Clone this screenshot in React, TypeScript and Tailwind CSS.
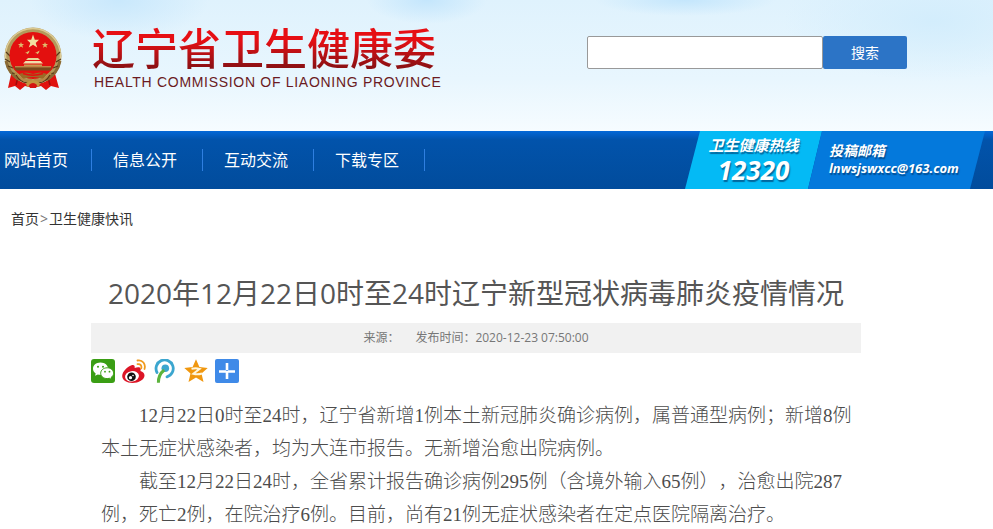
import type { ReactNode } from 'react';
import { useState } from 'react';

const NAV_ITEMS = ['网站首页', '信息公开', '互动交流', '下载专区'];

const PARAGRAPHS = [
  '12月22日0时至24时，辽宁省新增1例本土新冠肺炎确诊病例，属普通型病例；新增8例本土无症状感染者，均为大连市报告。无新增治愈出院病例。',
  '截至12月22日24时，全省累计报告确诊病例295例（含境外输入65例），治愈出院287例，死亡2例，在院治疗6例。目前，尚有21例无症状感染者在定点医院隔离治疗。',
];

function Emblem() {
  return (
    <svg viewBox="0 0 60 66" className="h-[66px] w-[60px] shrink-0" aria-hidden="true">
      {/* 绶带 */}
      <path d="M9 44 L5 62 L12 60 L17 64 L22 60 L30 62 L38 60 L43 64 L48 60 L56 62 L51 44 Z" fill="#e0120f" />
      <path d="M13 59 L15 51 M47 59 L45 51" stroke="#9c0d0b" strokeWidth="1.5" />
      {/* 麦穗 */}
      <circle cx="30" cy="30" r="28.500" fill="#b39a5c" />
      <circle cx="30" cy="30" r="27.500" fill="none" stroke="#dccb94" strokeWidth="1.500" />
      <path d="M3 35 A28 28 0 0 0 17 54 M57 35 A28 28 0 0 1 43 54" fill="none" stroke="#8a6a35" strokeWidth="3" />
      <path d="M3 26 l4 4 M2 33 l5 3 M5 40 l5 2 M9 47 l5 1 M57 26 l-4 4 M58 33 l-5 3 M55 40 l-5 2 M51 47 l-5 1" stroke="#54391a" strokeWidth="1.200" />
      <circle cx="30" cy="29.500" r="23.500" fill="#e3100f" />
      {/* 五星 */}
      <path d="M30 8.500 L31.800 13.800 L36 13.800 L32.700 17 L34.200 21.500 L30 18.800 L25.800 21.500 L27.300 17 L24 13.800 L28.200 13.800 Z" fill="#f1e0a0" />
      <g fill="#dfba6c">
        <path d="M18 16 l.8 2 h2.200 l-1.700 1.500 .8 2.300 -2.100 -1.300 -2 1.300 .7 -2.300 -1.700 -1.500 h2.200 z" />
        <path d="M42 16 l.8 2 h2.200 l-1.700 1.500 .8 2.300 -2.100 -1.300 -2 1.300 .7 -2.300 -1.700 -1.500 h2.200 z" />
        <path d="M22 27 l2 -1 2.500 -1.500 -.5 2 -1.500 1.800 -.7 -1 z" />
        <path d="M32 27 l2 -1 2.500 -1.500 -.5 2 -1.500 1.800 -.7 -1 z" />
      </g>
      {/* 天安门 */}
      <path d="M23 34 L25 32 H35 L37 34 Z" fill="#e9d596" />
      <path d="M20 37.500 L22.500 35 H37.500 L40 37.500 Z" fill="#f0dfab" />
      <path d="M21 38.500 H39 V40 H21 Z" fill="#c79a50" />
      <path d="M11 40.500 H49 L47 44.500 H13 Z" fill="#7a4a1c" />
      <path d="M12 40.800 H48" stroke="#cfa45c" strokeWidth="1" />
      {/* 齿轮与垂绶 */}
      <path d="M16 48 Q23 45 30 48 Q37 45 44 48 L40 53 Q30 49 20 53 Z" fill="#9c6a26" />
      <path d="M20 47.500 Q30 51 40 47.500" fill="none" stroke="#e3100f" strokeWidth="1.500" />
      <path d="M12 46 Q18 57 29 54 M48 46 Q42 57 31 54" fill="none" stroke="#b58a45" strokeWidth="2.500" />
      <path d="M13 49 Q19 59 28 56 M47 49 Q41 59 32 56" fill="none" stroke="#5b3414" strokeWidth="1.200" />
      <path d="M23 57 Q30 51 37 57 L36 61 L30 59 L24 61 Z" fill="#c2963f" />
      <path d="M26 59 Q30 55 34 59 L33 62 H27 Z" fill="#d41411" />
    </svg>
  );
}

function WechatIcon() {
  return (
    <svg viewBox="0 0 24 24" className="size-6">
      <rect width="24" height="24" rx="3" fill="#3a9e14" />
      <path d="M9.500 3.500 C5 3.500 2 6.300 2 9.700 C2 11.700 3.100 13.300 4.700 14.400 L4 16.800 L6.800 15.400 C7.700 15.700 8.600 15.800 9.500 15.800 C14 15.800 17 13.100 17 9.700 C17 6.300 14 3.500 9.500 3.500 Z" fill="#fff" />
      <path d="M16.200 8.800 C12.300 8.800 9.700 11.300 9.700 14.200 C9.700 17.200 12.400 19.600 16.200 19.600 C17 19.600 17.800 19.500 18.500 19.300 L20.800 20.600 L20.200 18.300 C21.700 17.300 22.600 15.900 22.600 14.200 C22.600 11.300 19.900 8.800 16.200 8.800 Z" fill="#fff" stroke="#3a9e14" strokeWidth="1" />
      <g fill="#3a9e14">
        <circle cx="7" cy="7.700" r="1" />
        <circle cx="12" cy="7.700" r="1" />
        <circle cx="14" cy="12.700" r=".9" />
        <circle cx="18.500" cy="12.700" r=".9" />
      </g>
    </svg>
  );
}

function WeiboIcon() {
  return (
    <svg viewBox="0 0 24 24" className="size-6">
      <path d="M9.500 6.300 C11.500 5.300 13.200 6.300 12.700 9 C15.200 8 18.200 7.800 18.700 9.800 C18.900 10.600 18.500 11.400 18.400 12 C21 12.800 22.500 14.300 22.500 16.500 C22.500 20.700 16.500 24 10.500 24 C4.500 24 .2 21 .2 17 C.2 13 5 7.900 9.500 6.300 Z" fill="#dc1526" />
      <ellipse cx="10" cy="17.300" rx="7" ry="5.200" transform="rotate(-8 10 17.300)" fill="#fff" />
      <circle cx="9.500" cy="17.700" r="4.300" fill="#111" />
      <circle cx="8.500" cy="18.700" r="1.600" fill="#fff" />
      <circle cx="11" cy="16.500" r=".8" fill="#fff" />
      <path d="M15.500 1.500 C20.500 .5 24 5 22.500 10 M15.500 5.200 C18.500 4.700 20 6.800 19.200 9.400" fill="none" stroke="#f09a1c" strokeWidth="1.800" strokeLinecap="round" />
    </svg>
  );
}

function TencentIcon() {
  return (
    <svg viewBox="0 0 24 24" className="size-6">
      <path d="M4 13.500 A8.600 8.600 0 1 1 14 17.800" fill="none" stroke="#3ba6cf" strokeWidth="2.800" strokeLinecap="round" />
      <circle cx="12.300" cy="9.300" r="3.800" fill="#3ba6cf" />
      <path d="M11.200 11 C7.500 14 5.200 18 5.400 23.800" fill="none" stroke="#5cb33c" strokeWidth="3" />
    </svg>
  );
}

function QzoneIcon() {
  return (
    <svg viewBox="0 0 24 24" className="size-6">
      <path d="M12 .3 L15.400 8 L23.700 8.900 L17.500 14.400 L19.500 22.900 L12 18.600 L4.500 22.900 L6.500 14.400 L.3 8.900 L8.600 8 Z" fill="#f0970e" strokeLinejoin="round" />
      <path d="M7.500 9.800 Q12 8.700 15.700 9.900 L9.300 14.800 Q13.500 16 18 14.500" fill="none" stroke="#fff6dc" strokeWidth="2" />
    </svg>
  );
}

function MoreIcon() {
  return (
    <svg viewBox="0 0 24 24" className="size-6">
      <rect width="24" height="24" rx="2" fill="#3f8ae8" />
      <path d="M12 4 V11 M12 13 V20 M4 12.500 H11 M13 12.500 H20" stroke="#fff" strokeWidth="2.600" />
      <path d="M11 12.500 H13" stroke="#fff" strokeWidth="1.400" />
    </svg>
  );
}

const SHARE_LINKS: { label: string; icon: ReactNode }[] = [
  { label: '微信', icon: <WechatIcon /> },
  { label: '新浪微博', icon: <WeiboIcon /> },
  { label: '腾讯微博', icon: <TencentIcon /> },
  { label: 'QQ空间', icon: <QzoneIcon /> },
  { label: '更多', icon: <MoreIcon /> },
];

function Header() {
  const [keyword, setKeyword] = useState('');

  return (
    <header className="flex h-[131px] items-start justify-between bg-[#e6f5fd] bg-[radial-gradient(ellipse_90px_40px_at_12%_0%,#c9e8fc,transparent),radial-gradient(ellipse_60px_24px_at_43%_0%,#c4e6fc,transparent),radial-gradient(ellipse_90px_16px_at_69%_0%,#c4e6fc,transparent),radial-gradient(ellipse_150px_60px_at_94%_16%,#d3edfc,transparent),linear-gradient(to_bottom,#dff2fd,#e8f6fe_60%,#f6fcff)] pr-[86px] pl-[3px]">
      <a href="#" className="flex items-start gap-[29px] pt-[26px]">
        <Emblem />
        <span className="flex flex-col">
          <span className="bg-linear-to-b from-[#e60f14] from-30% to-[#8e1013] to-85% bg-clip-text font-['Liberation_Sans','Noto_Sans_CJK_SC',sans-serif] text-[43px] leading-[48px] font-medium text-transparent">
            辽宁省卫生健康委
          </span>
          <span className="pl-[2px] font-['Liberation_Sans',sans-serif] text-sm leading-4 tracking-wider text-[#6b1a22]">
            HEALTH COMMISSION OF LIAONING PROVINCE
          </span>
        </span>
      </a>

      <form className="flex pt-9" onSubmit={(e) => e.preventDefault()}>
        <input
          type="text"
          aria-label="搜索"
          value={keyword}
          onChange={(e) => setKeyword(e.target.value)}
          className="h-[33px] w-[236px] rounded-xs border border-[#999] bg-white px-2 text-sm outline-none"
        />
        <button type="submit" className="h-[33px] w-[84px] rounded-xs bg-[#2c74c6] text-sm text-white">
          搜索
        </button>
      </form>
    </header>
  );
}

function Navbar() {
  return (
    <nav className="flex h-[58px] items-stretch justify-between bg-linear-to-b from-[#0468d8] via-[#0253ab] via-15% to-[#014c9c]">
      <ul className="flex items-center">
        {NAV_ITEMS.map((item) => (
          <li key={item} className="flex h-[22px] w-[111px] items-center border-r border-[#2f7fe0] first:w-[92px] first:pl-1 not-first:pl-[21px]">
            <a href="#" className="text-base leading-[22px] text-white">{item}</a>
          </li>
        ))}
      </ul>

      <div className="flex pr-2 font-bold text-white italic text-shadow-[1px_2px_1px_#00336699]">
        <div className="flex w-[137px] flex-col items-center bg-[#04baf5] pt-[5px] [clip-path:polygon(15px_0,100%_0,calc(100%_-_14px)_100%,0_100%)]">
          <span className="font-['Liberation_Sans','Noto_Sans_CJK_SC',sans-serif] text-[15px] leading-5">卫生健康热线</span>
          <span className="text-[26px] leading-7">12320</span>
        </div>
        <div className="-ml-[14px] flex w-[177px] flex-col justify-center bg-[#0479dc] pl-[21px] [clip-path:polygon(14px_0,100%_0,calc(100%_-_15px)_100%,0_100%)]">
          <span className="font-['Liberation_Sans','Noto_Sans_CJK_SC',sans-serif] text-sm leading-4">投稿邮箱</span>
          <a href="mailto:lnwsjswxcc@163.com" className="text-[13px] leading-[18px]">lnwsjswxcc@163.com</a>
        </div>
      </div>
    </nav>
  );
}

export default function App() {
  return (
    <div className="min-h-screen bg-white font-['Open_Sans','Noto_Sans_CJK_SC',sans-serif]" lang="zh-CN">
      <Header />
      <Navbar />

      {/* 面包屑 */}
      <div className="flex gap-px px-[11px] pt-5 text-sm leading-5 text-[#333]">
        <a href="#">首页</a>
        <span className="text-[#777]">&gt;</span>
        <a href="#">卫生健康快讯</a>
      </div>

      <main className="mr-[132px] ml-[91px] pt-11">
        <h1 className="text-center text-[28px] leading-10 text-[#555]">
          2020年12月22日0时至24时辽宁新型冠状病毒肺炎疫情情况
        </h1>

        <div className="mt-[10px] flex h-[30px] items-center justify-center gap-4 bg-[#f1f1f1] text-xs text-[#777] [text-spacing-trim:space-all]">
          <span>来源：</span>
          <span>发布时间：2020-12-23 07:50:00</span>
        </div>

        <div className="mt-[6px] flex gap-[7px]">
          {SHARE_LINKS.map((s) => (
            <a key={s.label} href="#" aria-label={s.label}>{s.icon}</a>
          ))}
        </div>

        <article className="mt-4 pr-1 pl-[10px] font-['Liberation_Serif','Noto_Sans_CJK_SC',serif] text-[19px] leading-[33px] font-light text-[#4c4c4c] [text-spacing-trim:space-all]">
          {PARAGRAPHS.map((text) => (
            <p key={text} className="indent-[38px]">{text}</p>
          ))}
        </article>
      </main>
    </div>
  );
}
